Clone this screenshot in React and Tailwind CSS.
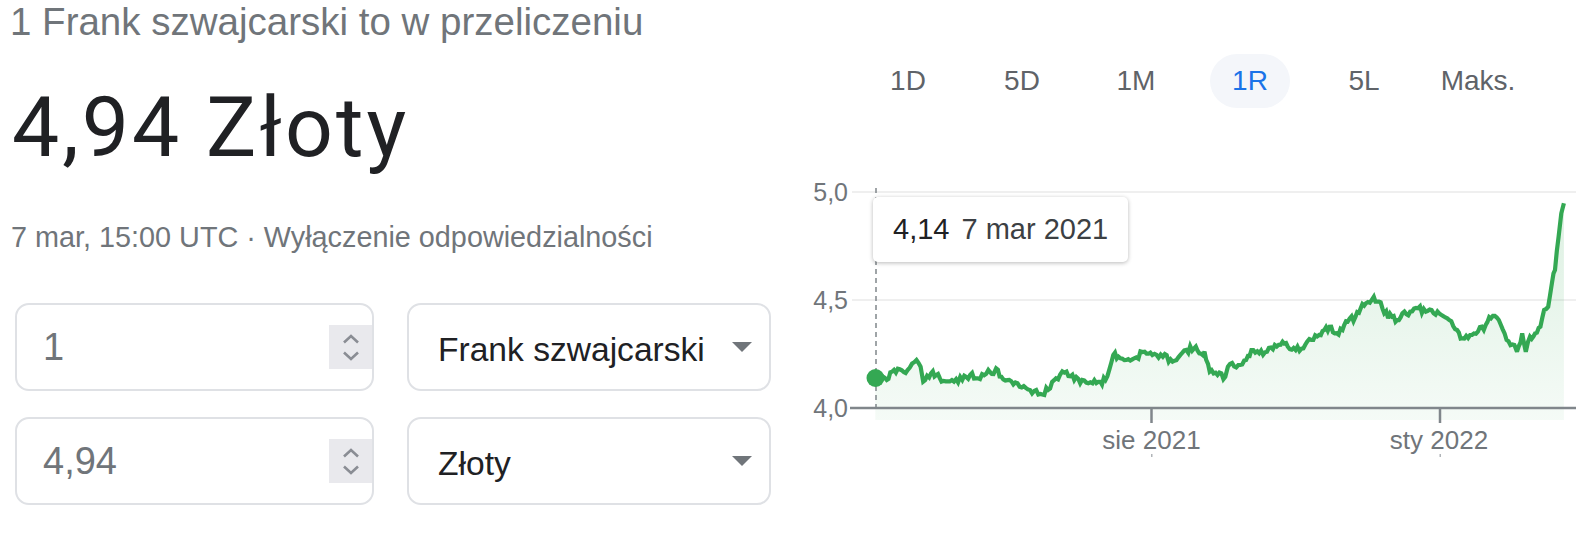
import React from "react";

// key points of the 1R series, in chart (svg) coordinates
const KEY = [
    [95.3, 208.3], [106.8, 210], [112, 201.7], [119.8, 199.3], [127.6, 200], [136.5, 190],
    [140.6, 196.7], [143.2, 211.7], [151, 203.3], [156.3, 205], [161.5, 211.7], [171.9, 210],
    [182.3, 210], [190.1, 205], [197.9, 208.3], [208.3, 200], [213.5, 204], [216.1, 198.3],
    [221.4, 206.7], [229.2, 210], [239.6, 216.7], [250, 220], [260.4, 224], [268.2, 220],
    [276, 208.3], [286.5, 201.7], [294.3, 210], [302.1, 210], [312.5, 213.3], [320.3, 211.7],
    [325.5, 210], [333.3, 185], [338.5, 186.7], [346.4, 190], [354.2, 188.3], [364.6, 181.7],
    [372.4, 185], [382.8, 186.7], [390.6, 189.3], [398.4, 187.3], [406.3, 180], [414.1, 178.3],
    [419.3, 183.3], [424.5, 181.7], [429.7, 201.7], [437.5, 205], [445.3, 206.7], [447.9, 196.7],
    [458.3, 195], [466.1, 190], [471.4, 180], [479.2, 183.3], [487, 181.7], [494.8, 175],
    [502.6, 171.7], [507.8, 176.7], [515.6, 180], [523.4, 178.3], [531.3, 170], [539.1, 165],
    [544.3, 160], [549.5, 156.7], [554.7, 163.3], [562.5, 160], [567.7, 151.7], [575.5, 146.7],
    [580.7, 138.3], [585.9, 133.3], [593.8, 126.7], [599, 131.7], [604.2, 143.3], [612, 146.7],
    [617.2, 150], [622.4, 143.3], [630.2, 141.7], [638, 138.3], [645.8, 141.7], [653.6, 143.3],
    [661.5, 145], [669.3, 150], [677.1, 160], [682.3, 168.3], [690.1, 165], [697.9, 161.7],
    [705.7, 155], [710.9, 148.3], [718.8, 150], [726.6, 170], [734.4, 175], [737, 181.7],
    [742.2, 163.3], [745.8, 181.7], [750, 166.7], [755.2, 163.3], [760.4, 156.7], [764.1, 140],
    [768.2, 136.7], [771.9, 113.3], [775, 100], [778.6, 66.7], [781.3, 43.3], [783.9, 33.3],
];

function buildLine() {
    let seed = 11;
    const rnd = () => {
        seed = (seed * 9301 + 49297) % 233280;
        return seed / 233280;
    };
    const pts = [];
    for (let i = 0; i < KEY.length - 1; i++) {
        const [x0, y0] = KEY[i];
        const [x1, y1] = KEY[i + 1];
        const steps = Math.max(1, Math.round((x1 - x0) / 2));
        for (let s = 0; s < steps; s++) {
            const t = s / steps;
            const j = s === 0 ? 0 : (rnd() - 0.5) * 7;
            pts.push([x0 + (x1 - x0) * t, y0 + (y1 - y0) * t + j]);
        }
    }
    pts.push(KEY[KEY.length - 1]);
    return pts;
}

const LINE = buildLine();
const LINE_D = LINE.map((p, i) => `${i ? "L" : "M"}${p[0].toFixed(1)} ${p[1].toFixed(1)}`).join(" ");
const AREA_D = `${LINE_D} L${LINE[LINE.length - 1][0]} 250 L${LINE[0][0]} 250 Z`;

const tabs = ["1D", "5D", "1M", "1R", "5L", "Maks."];

const Spinner = () => (
    <div className="w-[43px] h-[44px] bg-[#e9e9ed] flex flex-col items-center justify-center gap-[7px]">
        <svg width="18" height="10" viewBox="0 0 18 10">
            <path d="M2 8.5 L9 2 L16 8.5" fill="none" stroke="#8a8d94" strokeWidth="2.6" />
        </svg>
        <svg width="18" height="10" viewBox="0 0 18 10">
            <path d="M2 1.5 L9 8 L16 1.5" fill="none" stroke="#8a8d94" strokeWidth="2.6" />
        </svg>
    </div>
);

const Caret = () => (
    <svg width="20" height="10" viewBox="0 0 20 10">
        <path d="M0 0 L20 0 L10 10 Z" fill="#70757a" />
    </svg>
);

const AmountBox = ({ value }) => (
    <div className="w-[359px] h-[88px] border-2 border-[#dfe1e5] rounded-[14px] flex items-center overflow-hidden">
        <span className="flex-1 pl-[26px] text-[38px] text-[#70757a]">{value}</span>
        <Spinner />
    </div>
);

const CurrencyBox = ({ label }) => (
    <div className="w-[364px] h-[88px] border-2 border-[#dfe1e5] rounded-[14px] flex items-center justify-between pl-[29px] pr-[17px]">
        <span className="pt-[6px] text-[33.6px] text-[#202124]">{label}</span>
        <Caret />
    </div>
);

const Chart = () => (
    <div className="relative w-[814px] h-[300px] mt-[62px]">
        <svg width="814" height="300" viewBox="0 0 814 300" className="block">
            <defs>
                <linearGradient id="area" x1="0" y1="30" x2="0" y2="250" gradientUnits="userSpaceOnUse">
                    <stop offset="0" stopColor="#34a853" stopOpacity="0.17" />
                    <stop offset="1" stopColor="#34a853" stopOpacity="0.05" />
                </linearGradient>
            </defs>
            <line x1="72" y1="22" x2="796" y2="22" stroke="#efefef" strokeWidth="2" />
            <line x1="72" y1="130" x2="796" y2="130" stroke="#efefef" strokeWidth="2" />
            <path d={AREA_D} fill="url(#area)" />
            <line x1="96" y1="18" x2="96" y2="238" stroke="#80868b" strokeWidth="1.5" strokeDasharray="5 4" />
            <line x1="70" y1="238" x2="796" y2="238" stroke="#80868b" strokeWidth="2.5" />
            <line x1="371.5" y1="238" x2="371.5" y2="253" stroke="#80868b" strokeWidth="2.5" />
            <line x1="660" y1="238" x2="660" y2="253" stroke="#80868b" strokeWidth="2.5" />
            <rect x="371" y="284" width="1.5" height="3" fill="#b0b4b8" />
            <rect x="659.5" y="284" width="1.5" height="3" fill="#b0b4b8" />
            <path d={LINE_D} fill="none" stroke="#34a853" strokeWidth="4.2" strokeLinejoin="miter" strokeMiterlimit="3" />
            <circle cx="95.5" cy="208" r="9" fill="#34a853" />
            <g fontFamily="Liberation Sans, Arial, sans-serif" fontSize="25" fill="#70757a">
                <text x="68" y="31" textAnchor="end">5,0</text>
                <text x="68" y="139" textAnchor="end">4,5</text>
                <text x="68" y="247" textAnchor="end">4,0</text>
            </g>
            <g fontFamily="Liberation Sans, Arial, sans-serif" fontSize="26" fill="#70757a">
                <text x="371.5" y="279" textAnchor="middle">sie 2021</text>
                <text x="659" y="279" textAnchor="middle">sty 2022</text>
            </g>
        </svg>

        {/* hover tooltip */}
        <div className="absolute left-[93px] top-[27px] w-[255px] h-[65px] bg-white rounded-[5px] shadow-[0_1px_4px_rgba(0,0,0,0.28)] flex items-center pl-[20px] text-[29px]">
            <span className="text-[#202124]">4,14</span>
            <span className="ml-[12px] text-[#3c4043]">7 mar 2021</span>
        </div>
    </div>
);

export default function App() {
    return (
        <div className="w-[1594px] h-[545px] bg-white flex overflow-hidden font-['Liberation_Sans',Arial,sans-serif]">
            {/* Converter */}
            <div className="w-[780px] shrink-0 flex flex-col">
                <div className="pl-[10px] text-[38.5px] leading-[43px] text-[#70757a] whitespace-nowrap">
                    1 Frank szwajcarski to w przeliczeniu
                </div>
                <div className="mt-[37px] pl-[12px] font-['Roboto',sans-serif] text-[84px] leading-[96px] tracking-[3px] text-[#202124]">
                    4,94 Złoty
                </div>
                <div className="mt-[43px] pl-[11px] text-[28.8px] leading-[36px] text-[#70757a] whitespace-nowrap">
                    7 mar, 15:00 UTC · Wyłączenie odpowiedzialności
                </div>
                <div className="mt-[48px] pl-[15px] flex flex-col gap-[26px]">
                    <div className="flex gap-[33px]">
                        <AmountBox value="1" />
                        <CurrencyBox label="Frank szwajcarski" />
                    </div>
                    <div className="flex gap-[33px]">
                        <AmountBox value="4,94" />
                        <CurrencyBox label="Złoty" />
                    </div>
                </div>
            </div>

            {/* Chart */}
            <div className="w-[814px] shrink-0 flex flex-col">
                <div className="mt-[54px] h-[54px] pl-[71px] flex">
                    {tabs.map((t) => (
                        <div key={t} className="w-[114px] flex items-center justify-center">
                            {t === "1R" ? (
                                <span className="w-[80px] h-[54px] rounded-full bg-[#f4f6fa] flex items-center justify-center text-[28px] text-[#1a73e8]">
                                    {t}
                                </span>
                            ) : (
                                <span className="text-[28px] text-[#5f6368]">{t}</span>
                            )}
                        </div>
                    ))}
                </div>
                <Chart />
            </div>
        </div>
    );
}
